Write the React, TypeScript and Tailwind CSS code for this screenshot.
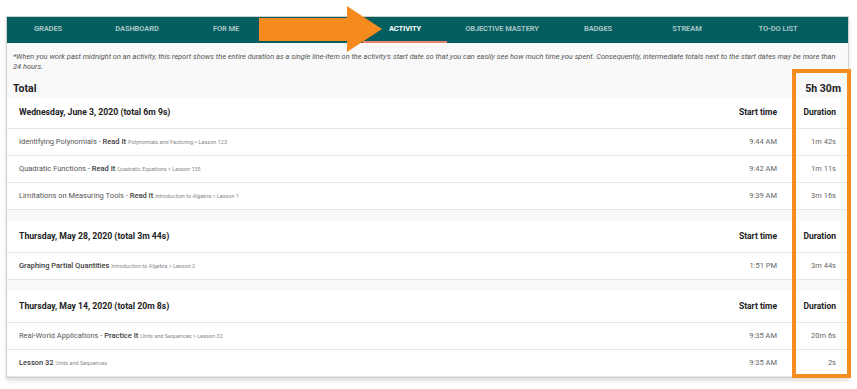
import React from "react";

const tabs = [
  { label: "GRADES", w: "w-[82px]" },
  { label: "DASHBOARD", w: "w-[96px]" },
  { label: "FOR ME", w: "w-[82px]" },
  { label: "", w: "w-[96px]" },
  { label: "ACTIVITY", w: "w-[84px]", active: true },
  { label: "OBJECTIVE MASTERY", w: "w-[110px]" },
  { label: "BADGES", w: "w-[82px]" },
  { label: "STREAM", w: "w-[96px]" },
  { label: "TO-DO LIST", w: "w-[86px]" },
];

const sections = [
  {
    date: "Wednesday, June 3, 2020 (total 6m 9s)",
    rows: [
      { title: "Identifying Polynomials - ", kind: "Read It", path: "Polynomials and Factoring > Lesson 123", time: "9:44 AM", dur: "1m 42s" },
      { title: "Quadratic Functions - ", kind: "Read It", path: "Quadratic Equations > Lesson 135", time: "9:42 AM", dur: "1m 11s" },
      { title: "Limitations on Measuring Tools - ", kind: "Read It", path: "Introduction to Algebra > Lesson 1", time: "9:39 AM", dur: "3m 16s" },
    ],
  },
  {
    date: "Thursday, May 28, 2020 (total 3m 44s)",
    rows: [
      { title: "", kind: "Graphing Partial Quantities", path: "Introduction to Algebra > Lesson 2", time: "1:51 PM", dur: "3m 44s" },
    ],
  },
  {
    date: "Thursday, May 14, 2020 (total 20m 8s)",
    rows: [
      { title: "Real-World Applications - ", kind: "Practice It", path: "Units and Sequences > Lesson 32", time: "9:35 AM", dur: "20m 6s" },
      { title: "", kind: "Lesson 32", path: "Units and Sequences", time: "9:35 AM", dur: "2s" },
    ],
  },
];

export default function App() {
  return (
    <div className="relative min-h-screen bg-white pt-[16px] font-['Roboto',sans-serif]">
      <div className="ml-[6px] w-[843px] border border-[#cfcfcf] bg-[#f9f9f9] shadow-[0_3px_4px_rgba(0,0,0,0.12)]">
        {/* tabs */}
        <div className="flex h-[26px] bg-[#045e5f]">
          {tabs.map((t, i) => (
            <div
              key={i}
              className={
                t.w +
                " flex items-center justify-center border-b-2 text-[7.5px] font-bold tracking-[-0.1px] " +
                (t.active ? "border-[#ee8072] text-white" : "border-transparent text-[#a5c3c3]")
              }
            >
              {t.label}
            </div>
          ))}
        </div>

        <p className="pl-[6px] pr-[4px] pt-[9px] text-[7.45px] italic leading-[10px] text-[#555]">
          *When you work past midnight on an activity, this report shows the entire duration as a single line-item on the activity's start date so that you can easily see how much time you spent. Consequently, intermediate totals next to the start dates may be more than
          <br />
          24 hours.
        </p>

        <div className="flex h-[25px] items-center justify-between pl-[6px] pr-[7px] pt-[8px] text-[10.5px] font-bold text-[#222]">
          <span>Total</span>
          <span>5h 30m</span>
        </div>

        {sections.map((s, si) => (
          <div key={si} className={si > 0 ? "mt-[11px]" : ""}>
            <div className="flex h-[32px] items-center border-b border-[#e6e6e6] bg-white pl-[12px] pr-[12px] text-[#222]">
              <span className="flex-1 text-[8.7px] font-bold">{s.date}</span>
              <span className="text-[8.5px] font-bold">Start time</span>
              <span className="w-[59px] text-right text-[8.5px] font-bold">Duration</span>
            </div>
            {s.rows.map((r, ri) => (
              <div key={ri} className="flex h-[27px] items-center border-b border-[#e6e6e6] bg-white pl-[12px] pr-[12px]">
                <span className="flex-1 text-[7.5px] text-[#555]">
                  {r.title}
                  <span className="font-medium text-[#3d3d3d]">{r.kind}</span>
                  <span className="ml-[2px] text-[5.5px] text-[#888]">{r.path}</span>
                </span>
                <span className="text-[7.5px] text-[#666]">{r.time}</span>
                <span className="w-[59px] text-right text-[7.5px] text-[#666]">{r.dur}</span>
              </div>
            ))}
          </div>
        ))}
      </div>

      {/* annotation arrow */}
      <svg className="absolute left-[259px] top-[6px]" width="123" height="46" viewBox="0 0 123 46">
        <polygon points="0,12 88,12 88,0 123,23 88,46 88,35 0,35" fill="#f58a1f" />
      </svg>

      {/* annotation box */}
      <div className="absolute left-[792px] top-[69px] h-[309px] w-[59px] border-4 border-[#f78d1e]" />
    </div>
  );
}
